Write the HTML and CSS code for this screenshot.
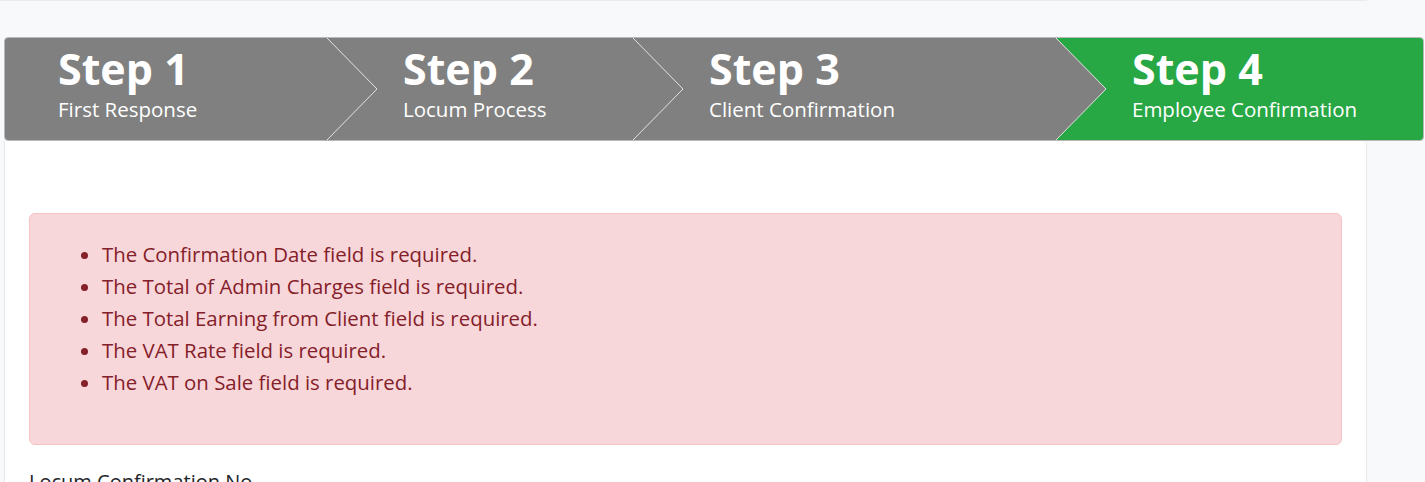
FILE: index.html
```html
<!DOCTYPE html>
<html lang="en">
<head>
<meta charset="utf-8">
<title>Employee Confirmation</title>
<link rel="stylesheet" href="styles.css">
</head>
<body>
<div class="topline"></div>
<div class="wizard">
  <div class="step done">
    <div class="step-title">Step 1</div>
    <div class="step-sub">First Response</div>
    <svg class="chev" viewBox="0 0 52 104" width="52" height="104"><polygon points="0,0 50,51 0,102" /><polyline points="0,0 50,51 0,102" /></svg>
  </div>
  <div class="step done">
    <div class="step-title">Step 2</div>
    <div class="step-sub">Locum Process</div>
    <svg class="chev" viewBox="0 0 52 104" width="52" height="104"><polygon points="0,0 50,51 0,102" /><polyline points="0,0 50,51 0,102" /></svg>
  </div>
  <div class="step done">
    <div class="step-title">Step 3</div>
    <div class="step-sub">Client Confirmation</div>
    <svg class="chev" viewBox="0 0 52 104" width="52" height="104"><polygon points="0,0 50,51 0,102" /><polyline points="0,0 50,51 0,102" /></svg>
  </div>
  <div class="step active">
    <div class="step-title">Step 4</div>
    <div class="step-sub">Employee Confirmation</div>
  </div>
</div>
<div class="card">
  <div class="alert">
    <ul>
      <li>The Confirmation Date field is required.</li>
      <li>The Total of Admin Charges field is required.</li>
      <li>The Total Earning from Client field is required.</li>
      <li>The VAT Rate field is required.</li>
      <li>The VAT on Sale field is required.</li>
    </ul>
  </div>
  <div class="field-label">Locum Confirmation No</div>
</div>
</body>
</html>
```
FILE: styles.css
```css
* { box-sizing: border-box; }
html, body { margin: 0; padding: 0; }
body {
  background: #f8f9fb;
  font-family: "Open Sans", "Noto Sans", sans-serif;
  color: #212529;
  overflow: hidden;
}
.topline {
  height: 1px;
  width: 1367px;
  background: #fff;
  border-bottom: 1px solid #e9ebee;
}
.wizard {
  margin: 36px 1px 0 4px;
  height: 104px;
  display: grid;
  grid-template-columns: 322px 306px 423px 1fr;
  border: 1px solid #b8b8b8;
  border-radius: 4px;
  overflow: hidden;
}
.step {
  position: relative;
  padding: 11px 0 0 76px;
  color: #fff;
  white-space: nowrap;
}
.step:first-child { padding-left: 53px; }
.step.done { background: #808080; }
.step.active { background: #28a745; }
.step:nth-child(1) { z-index: 4; }
.step:nth-child(2) { z-index: 3; }
.step:nth-child(3) { z-index: 2; }
.step:nth-child(4) { z-index: 1; }
.step-title {
  font-size: 43px;
  font-weight: 700;
  line-height: 40px;
}
.step-sub {
  margin-top: 10px;
  font-size: 20.5px;
  line-height: 20px;
}
.chev {
  position: absolute;
  top: 0;
  left: 100%;
  display: block;
}
.chev polygon { fill: #808080; stroke: none; }
.chev polyline { fill: none; stroke: #e2e2e2; stroke-width: 1; }
.card {
  margin-left: 4px;
  width: 1363px;
  min-height: 400px;
  background: #fff;
  border: 1px solid #e6e8eb;
  border-top: none;
  border-radius: 0 4px 0 0;
  padding: 72px 24px 0 24px;
}
.alert {
  height: 232px;
  background: #f8d7da;
  border: 1px solid #f5c2c7;
  border-radius: 6px;
  color: #842029;
  padding: 24px 32px;
}
.alert ul {
  margin: 0;
  padding-left: 40px;
  font-size: 20.4px;
  line-height: 32px;
}
.field-label {
  margin-top: 22px;
  font-size: 20px;
  line-height: 30px;
}
```
